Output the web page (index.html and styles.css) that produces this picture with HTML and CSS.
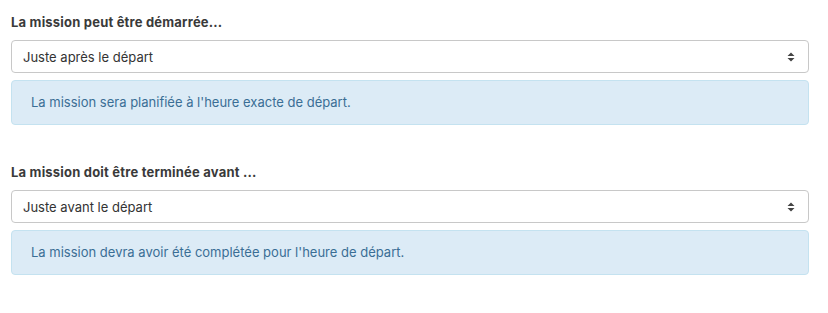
FILE: index.html
```html
<!DOCTYPE html>
<html lang="fr">
<head>
    <meta charset="UTF-8">
    <title>Mission</title>
    <link rel="stylesheet" href="styles.css">
</head>
<body>
    <div class="form-group">
        <label class="control-label" for="start">La mission peut être démarrée...</label>
        <div class="select-wrap">
            <select id="start" class="form-control">
                <option>Juste après le départ</option>
            </select>
            <svg class="select-arrow" width="8" height="10" viewBox="0 0 8 10">
                <path d="M4 0.5 L7.5 4 L0.5 4 Z M4 9.5 L7.5 6 L0.5 6 Z" fill="#444"/>
            </svg>
        </div>
        <div class="alert alert-info">La mission sera planifiée à l'heure exacte de départ.</div>
    </div>

    <div class="form-group">
        <label class="control-label" for="end">La mission doit être terminée avant ...</label>
        <div class="select-wrap">
            <select id="end" class="form-control">
                <option>Juste avant le départ</option>
            </select>
            <svg class="select-arrow" width="8" height="10" viewBox="0 0 8 10">
                <path d="M4 0.5 L7.5 4 L0.5 4 Z M4 9.5 L7.5 6 L0.5 6 Z" fill="#444"/>
            </svg>
        </div>
        <div class="alert alert-info">La mission devra avoir été complétée pour l'heure de départ.</div>
    </div>
</body>
</html>
```

FILE: styles.css
```css
body {
    margin: 0;
    padding: 14px 19px 0 11px;
    font-family: Inter, "Noto Sans", sans-serif;
    font-size: 13px;
    color: #333;
    background: #fff;
}

.form-group {
    margin-bottom: 39px;
}

.control-label {
    display: block;
    font-weight: 700;
    line-height: 16px;
    letter-spacing: 0.2px;
    margin-bottom: 10px;
    color: #3a3a3a;
}

.select-wrap {
    position: relative;
}

.form-control {
    display: block;
    width: 100%;
    height: 33px;
    padding: 0 11px;
    border: 1px solid #c8c8c8;
    border-radius: 4px;
    background: #fff;
    font-family: inherit;
    font-size: 13px;
    color: #333;
    -webkit-appearance: none;
    appearance: none;
    box-sizing: border-box;
}

.select-arrow {
    position: absolute;
    right: 14px;
    top: 12px;
}

.alert {
    margin-top: 7px;
    padding: 13px 19px 14px;
    line-height: 16px;
    border: 1px solid #c4e2f0;
    border-radius: 4px;
}

.alert-info {
    background: #dcebf6;
    color: #3a6e95;
}
```
